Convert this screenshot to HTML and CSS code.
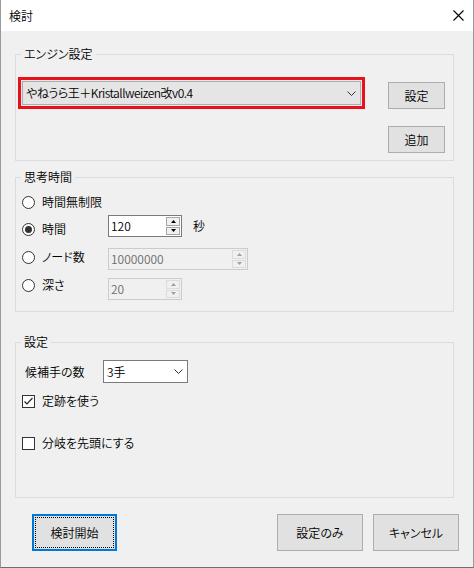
FILE: index.html
```html
<!DOCTYPE html>
<html lang="ja">
<head>
<meta charset="utf-8">
<title>検討</title>
<link rel="stylesheet" href="styles.css">
</head>
<body>
<div class="window">
  <div class="titlebar">
    <span class="title">検討</span>
    <svg class="close" width="11" height="11" viewBox="0 0 11 11"><path d="M0.5 0.5L10.5 10.5M10.5 0.5L0.5 10.5" stroke="#000" stroke-width="1.1" fill="none"/></svg>
  </div>
  <div class="content">
    <fieldset class="group g-engine">
      <legend>エンジン設定</legend>
      <div class="engine-row">
        <div class="highlight">
          <div class="combo combo-engine">
            <span class="combo-text">やねうら王＋Kristallweizen改v0.4</span>
            <svg class="chev" width="9" height="5" viewBox="0 0 9 5"><path d="M0.5 0.5L4.5 4.5L8.5 0.5" stroke="#333" stroke-width="1" fill="none"/></svg>
          </div>
        </div>
        <div class="engine-buttons">
          <button class="btn btn-small">設定</button>
          <button class="btn btn-small">追加</button>
        </div>
      </div>
    </fieldset>

    <fieldset class="group g-time">
      <legend>思考時間</legend>
      <div class="time-body">
        <div class="radio-col">
          <div class="radio r1"><span class="rb"></span><span>時間無制限</span></div>
          <div class="radio r2"><span class="rb on"></span><span>時間</span></div>
          <div class="radio r3"><span class="rb"></span><span>ノード数</span></div>
          <div class="radio r4"><span class="rb"></span><span>深さ</span></div>
        </div>
        <div class="input-col">
          <div class="spin-row s1">
            <div class="spin w-short">
              <span class="spin-value">120</span>
              <span class="spin-btns">
                <span class="sb"><svg width="5" height="3" viewBox="0 0 5 3"><path d="M2.5 0L5 3H0Z" fill="#000"/></svg></span>
                <span class="sb"><svg width="5" height="3" viewBox="0 0 5 3"><path d="M0 0H5L2.5 3Z" fill="#000"/></svg></span>
              </span>
            </div>
            <span class="unit">秒</span>
          </div>
          <div class="spin-row s2">
            <div class="spin w-long disabled">
              <span class="spin-value">10000000</span>
              <span class="spin-btns">
                <span class="sb"><svg width="5" height="3" viewBox="0 0 5 3"><path d="M2.5 0L5 3H0Z" fill="#a0a0a0"/></svg></span>
                <span class="sb"><svg width="5" height="3" viewBox="0 0 5 3"><path d="M0 0H5L2.5 3Z" fill="#a0a0a0"/></svg></span>
              </span>
            </div>
          </div>
          <div class="spin-row s3">
            <div class="spin w-short disabled">
              <span class="spin-value">20</span>
              <span class="spin-btns">
                <span class="sb"><svg width="5" height="3" viewBox="0 0 5 3"><path d="M2.5 0L5 3H0Z" fill="#a0a0a0"/></svg></span>
                <span class="sb"><svg width="5" height="3" viewBox="0 0 5 3"><path d="M0 0H5L2.5 3Z" fill="#a0a0a0"/></svg></span>
              </span>
            </div>
          </div>
        </div>
      </div>
    </fieldset>

    <fieldset class="group g-settings">
      <legend>設定</legend>
      <div class="settings-body">
        <div class="cand-row">
          <span class="cand-label">候補手の数</span>
          <div class="combo combo-small">
            <span class="combo-text">3手</span>
            <svg class="chev" width="9" height="5" viewBox="0 0 9 5"><path d="M0.5 0.5L4.5 4.5L8.5 0.5" stroke="#333" stroke-width="1" fill="none"/></svg>
          </div>
        </div>
        <div class="check c1">
          <span class="cb"><svg width="11" height="11" viewBox="0 0 11 11"><path d="M1.5 5.5L4 8L9.5 2" stroke="#222" stroke-width="1.2" fill="none"/></svg></span>
          <span>定跡を使う</span>
        </div>
        <div class="check c2">
          <span class="cb"></span>
          <span>分岐を先頭にする</span>
        </div>
      </div>
    </fieldset>

    <div class="footer">
      <button class="btn btn-big focused"><span class="focus-ring">検討開始</span></button>
      <div class="footer-right">
        <button class="btn btn-big">設定のみ</button>
        <button class="btn btn-big">キャンセル</button>
      </div>
    </div>
  </div>
</div>
</body>
</html>
```
FILE: styles.css
```css
* { box-sizing: border-box; }
html, body { margin: 0; padding: 0; }
body {
  font-family: "Noto Sans CJK JP", sans-serif;
  font-size: 12px;
  font-weight: 350;
  color: #000;
  background: #f0f0f0;
  font-feature-settings: "palt";
}
.window {
  width: 474px;
  height: 568px;
  background: #f0f0f0;
  border-left: 1px solid #9a9a9a;
  border-right: 1px solid #9a9a9a;
  border-bottom: 1px solid #6e6e6e;
  display: flex;
  flex-direction: column;
}
.titlebar {
  height: 31px;
  background: #fff;
  display: flex;
  align-items: center;
  justify-content: space-between;
  padding: 0 9px 0 8px;
  flex: none;
}
.title { line-height: 16px; }
.close { display: block; }

.content {
  padding: 15px 0 0 14px;
}
.group {
  margin: 0 19px 0 0;
  padding: 0;
  border: 1px solid #dcdcdc;
  min-width: 0;
  display: block;
}
.group legend {
  padding: 0 3px;
  margin-left: 5px;
  line-height: 16px;
}
.g-engine { height: 115px; }
.g-time { height: 143px; margin-top: 8px; }
.g-settings { height: 164px; margin-top: 22px; }

/* engine group */
.engine-row {
  display: flex;
  align-items: flex-start;
  padding: 15px 8px 0 2px;
}
.highlight {
  width: 347px;
  height: 32px;
  border: 3px solid #e8101a;
  padding: 1px;
  background: #eaeaea;
}
.combo {
  display: flex;
  align-items: center;
  justify-content: space-between;
  border: 1px solid #adadad;
}
.combo-engine {
  height: 100%;
  background: #e5e5e5;
  padding: 0 4px 0 3px;
}
.combo-engine .combo-text { letter-spacing: -0.5px; }
.combo-text { line-height: 16px; white-space: nowrap; }
.chev { display: block; flex: none; }
.engine-buttons {
  margin-left: 23px;
  margin-top: 5px;
  display: flex;
  flex-direction: column;
  gap: 17px;
}

.btn {
  font-family: inherit;
  font-size: 12px;
  font-weight: inherit;
  font-feature-settings: "palt";
  color: #000;
  background: #e1e1e1;
  border: 1px solid #adadad;
  padding: 0;
  margin: 0;
  display: flex;
  align-items: center;
  justify-content: center;
  line-height: 16px;
}
.btn-small { width: 57px; height: 27px; }
.btn-big { width: 86px; height: 37px; }
.btn.focused {
  border: 2px solid #0078d7;
  padding: 1px;
  width: 85px;
}
.focus-ring {
  flex: 1;
  align-self: stretch;
  display: flex;
  align-items: center;
  justify-content: center;
  border: 1px dotted #000;
}

/* time group */
.time-body {
  display: flex;
  padding: 7px 0 0 6px;
}
.radio-col {
  width: 86px;
  display: flex;
  flex-direction: column;
}
.radio {
  height: 20px;
  display: flex;
  align-items: center;
  gap: 7px;
  line-height: 16px;
}
.r2 { margin-top: 7px; }
.r3, .r4 { margin-top: 8px; }
.rb {
  width: 13px;
  height: 13px;
  border: 1px solid #333;
  border-radius: 50%;
  background: #fff;
  display: flex;
  align-items: center;
  justify-content: center;
  flex: none;
}
.rb.on::before {
  content: "";
  width: 7px;
  height: 7px;
  border-radius: 50%;
  background: #333;
}
.input-col {
  display: flex;
  flex-direction: column;
  margin-top: 23px;
}
.spin-row { display: flex; align-items: center; gap: 11px; }
.s2 { margin-top: 11px; }
.s3 { margin-top: 8px; }
.spin {
  height: 22px;
  display: flex;
  border: 1px solid #7a7a7a;
  background: #fff;
}
.w-short { width: 74px; }
.w-long { width: 140px; }
.spin-value {
  flex: 1;
  padding-left: 2px;
  display: flex;
  align-items: center;
  line-height: 16px;
}
.spin-btns {
  width: 14px;
  margin: 1px 1px 1px 0;
  display: flex;
  flex-direction: column;
}
.sb {
  flex: 1;
  border: 1px solid #a6a6a6;
  background: #f0f0f0;
  display: flex;
  align-items: center;
  justify-content: center;
}
.sb + .sb { margin-top: 1px; }
.sb svg { display: block; }
.spin.disabled {
  border-color: #cccccc;
  background: #f0f0f0;
  color: #6d6d6d;
}
.spin.disabled .sb {
  border-color: #dcdcdc;
  background: #f0f0f0;
}
.unit { line-height: 16px; }

/* settings group */
.settings-body {
  padding: 10px 0 0 6px;
}
.cand-row {
  display: flex;
  align-items: center;
  padding-left: 3px;
}
.cand-label { width: 78px; line-height: 16px; }
.combo-small {
  width: 85px;
  height: 23px;
  background: #fff;
  border-color: #7a7a7a;
  padding: 0 4px 0 3px;
}
.check {
  height: 16px;
  display: flex;
  align-items: center;
  gap: 7px;
  line-height: 16px;
}
.c1 { margin-top: 10px; }
.c2 { margin-top: 26px; }
.cb {
  width: 13px;
  height: 13px;
  border: 1px solid #333;
  background: #fff;
  display: flex;
  align-items: center;
  justify-content: center;
  flex: none;
}
.cb svg { display: block; }

/* footer */
.footer {
  display: flex;
  margin-top: 16px;
  padding: 0 14px 0 17px;
}
.footer-right {
  margin-left: auto;
  display: flex;
  gap: 10px;
}
```
